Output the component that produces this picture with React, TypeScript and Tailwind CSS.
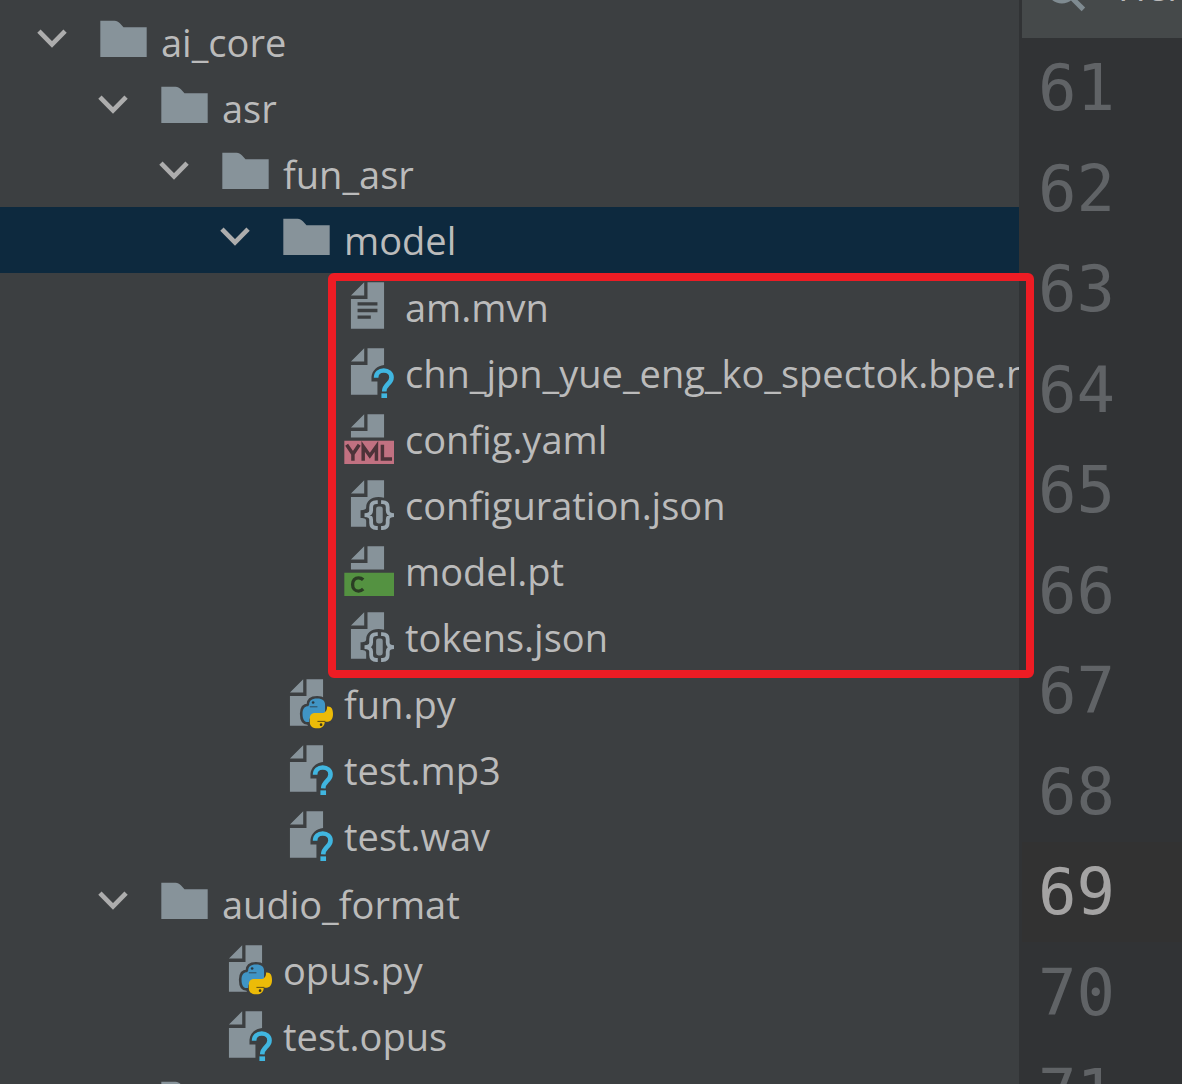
import type { ReactNode } from "react";

type Kind = "folder" | "text" | "unknown" | "yaml" | "json" | "c" | "python";

interface TreeNode {
  name: string;
  kind: Kind;
  selected?: boolean;
  framed?: boolean;
  children?: TreeNode[];
}

const tree: TreeNode[] = [
  {
    name: "ai_core",
    kind: "folder",
    children: [
      {
        name: "asr",
        kind: "folder",
        children: [
          {
            name: "fun_asr",
            kind: "folder",
            children: [
              {
                name: "model",
                kind: "folder",
                selected: true,
                framed: true,
                children: [
                  { name: "am.mvn", kind: "text" },
                  { name: "chn_jpn_yue_eng_ko_spectok.bpe.m", kind: "unknown" },
                  { name: "config.yaml", kind: "yaml" },
                  { name: "configuration.json", kind: "json" },
                  { name: "model.pt", kind: "c" },
                  { name: "tokens.json", kind: "json" },
                ],
              },
              { name: "fun.py", kind: "python" },
              { name: "test.mp3", kind: "unknown" },
              { name: "test.wav", kind: "unknown" },
            ],
          },
        ],
      },
      {
        name: "audio_format",
        kind: "folder",
        children: [
          { name: "opus.py", kind: "python" },
          { name: "test.opus", kind: "unknown" },
        ],
      },
      { name: "", kind: "folder" },
    ],
  },
];

const indents = ["pl-[25px]", "pl-[86px]", "pl-[147px]", "pl-[208px]", "pl-[269px]"];

const lineNumbers = [61, 62, 63, 64, 65, 66, 67, 68, 69, 70, 71];
const currentLine = 69;

function Icon({ children }: { children: ReactNode }) {
  return (
    <svg viewBox="0 0 16 16" className="size-[53px] shrink-0" aria-hidden="true">
      {children}
    </svg>
  );
}

function Page() {
  return <path fill="#87939a" d="M7 1 3 5h4V1ZM8 1v5H3v9h10V1H8Z" />;
}

function HalfPage() {
  return <path fill="#87939a" d="M7 1 3 5h4V1ZM8 1v5H3v2h10V1H8Z" />;
}

function FileIcon({ kind }: { kind: Kind }) {
  switch (kind) {
    case "folder":
      return (
        <Icon>
          <path fill="#87939a" d="M1 13h14V4H8L6.900 2.800C6.400 2.300 6 2 5.300 2H1v11Z" />
        </Icon>
      );
    case "text":
      return (
        <Icon>
          <Page />
          <path stroke="#3c3f41" d="M5 7.500h6M5 9.500h6M5 11.500h4" />
        </Icon>
      );
    case "unknown":
      return (
        <Icon>
          <path fill="#87939a" d="M7 1 3 5h4V1ZM8 1v5H3v9h8v-4H9.200V9.600C9.400 7.600 11 6.200 13 6V1H8Z" />
          <path fill="none" stroke="#40b6e0" strokeWidth="1.400" d="M10.600 9.900c0-1.400.95-2.200 2.300-2.200s2.350.85 2.350 2.100c0 1.900-2.200 2-2.200 4.200" />
          <path fill="#40b6e0" d="M12.200 14.600h1.700V16h-1.700z" />
        </Icon>
      );
    case "yaml":
      return (
        <Icon>
          <HalfPage />
          <path fill="#c17181" d="M1 9h15v7H1z" />
          <path fill="none" stroke="#4d3339" strokeWidth="1.050" d="m1.700 10.200 1.900 2.800 1.900-2.800M3.600 12.800V15M6.700 15v-4.300l2 2.800 2-2.800V15M12.500 10.200v4.300h2.900" />
        </Icon>
      );
    case "json":
      return (
        <Icon>
          <path fill="#87939a" d="M7 1 3 5h4V1ZM8 1v5H3v9h4.600v-1.700c0-.6-.3-.9-1.700-.9v-2.400c1.400 0 1.700-.3 1.700-.9C7.600 7.300 9 6 11.300 6c.6 0 1.100.1 1.700.3V1H8Z" />
          <path fill="none" stroke="#9aa7b0" strokeWidth="1.150" d="M11.100 7.600h-.4c-1 0-1.600.5-1.600 1.500v1c0 .8-.5 1.400-2 1.400 1.500 0 2 .6 2 1.400v1c0 1 .6 1.500 1.600 1.500h.4M12.100 7.600h.4c1 0 1.600.5 1.600 1.500v1c0 .8.500 1.400 2 1.400-1.500 0-2 .6-2 1.400v1c0 1-.6 1.500-1.600 1.500h-.4" />
          <rect x="10.600" y="8.900" width="2" height="5.100" rx=".7" fill="#87939a" />
        </Icon>
      );
    case "c":
      return (
        <Icon>
          <HalfPage />
          <path fill="#549241" d="M1 9h15v7H1z" />
          <path fill="none" stroke="#2b3d24" strokeWidth="1" d="M6.700 11.100c-.4-.4-.8-.6-1.400-.6-1.100 0-1.800.8-1.800 2s.7 2 1.800 2c.6 0 1-.2 1.400-.6" />
        </Icon>
      );
    case "python":
      return (
        <Icon>
          <Page />
          <g fill="#3c3f41" stroke="#3c3f41" strokeWidth="1.600" strokeLinejoin="round">
            <path d="M8.800 8.700c0-1.200.7-1.900 2.400-1.900s2.400.8 2.400 1.800v2c0 .9-.7 1.500-1.600 1.500h-1.800c-.9 0-1.400.6-1.400 1.600v.2h-.5c-1 0-1.500-1-1.500-2.500s.6-2.300 1.700-2.300Z" />
            <path d="M14.200 9.200h.3c1.100 0 1.500.9 1.500 2.300s-.6 2.300-1.600 2.300h-.9c0 1.200-.7 2-2.200 2s-2.300-.8-2.300-1.800v-1.500c0-.9.700-1.500 1.600-1.500h1.800c1 0 1.800-.5 1.800-1.800Z" />
          </g>
          <path fill="#4095c5" d="M8.800 8.700c0-1.200.7-1.900 2.400-1.900s2.400.8 2.400 1.800v2c0 .9-.7 1.500-1.600 1.500h-1.800c-.9 0-1.400.6-1.400 1.600v.2h-.5c-1 0-1.500-1-1.500-2.500s.6-2.300 1.700-2.300Z" />
          <path fill="#ecbb08" d="M14.200 9.200h.3c1.100 0 1.500.9 1.500 2.300s-.6 2.300-1.600 2.300h-.9c0 1.200-.7 2-2.200 2s-2.300-.8-2.300-1.800v-1.300c0-.9.700-1.500 1.600-1.500h1.800c1 0 1.800-.5 1.800-1.800Z" />
          <path stroke="#2f4a59" strokeWidth=".3" d="M9 9.300h2.300" />
          <path stroke="#5c4c12" strokeWidth=".3" d="M11.300 13.700h2.400" />
          <circle cx="10" cy="8" r=".4" fill="#2a3b45" />
          <circle cx="12.400" cy="14.700" r=".4" fill="#3b351f" />
        </Icon>
      );
  }
}

function Chevron() {
  return (
    <Icon>
      <path fill="none" stroke="#adadad" strokeWidth="1.400" d="m4.200 5.200 3.950 4 3.950-4" />
    </Icon>
  );
}

function Branch({ nodes, level }: { nodes: TreeNode[]; level: number }) {
  return (
    <ul className="pb-px">
      {nodes.map((node) => (
        <li key={node.name}>
          <div
            className={`flex h-[66px] items-center overflow-hidden pb-[3px] ${indents[level]} ${node.selected ? "bg-[#0d293e]" : ""}`}
          >
            <button type="button" aria-label={node.name} className="mr-[19px] size-[53px] shrink-0">
              {node.children && <Chevron />}
            </button>
            <FileIcon kind={node.kind} />
            <span className="min-w-0 flex-1 overflow-hidden pt-0.5 pl-[11px] text-[38px] leading-[52px] whitespace-nowrap">
              {node.name}
            </span>
          </div>
          {node.children && (
            <div className={node.framed ? "relative pt-px" : ""}>
              <Branch nodes={node.children} level={level + 1} />
              {node.framed && (
                <div className="pointer-events-none absolute top-0 -right-[15px] -bottom-[7px] left-[328px] z-10 rounded-md border-8 border-[#ed1c24]" />
              )}
            </div>
          )}
        </li>
      ))}
    </ul>
  );
}

export default function App() {
  return (
    <div className="flex h-screen overflow-hidden bg-[#313335] font-['Open_Sans','Noto_Sans',sans-serif] text-[#bbbbbb]">
      <nav className="min-w-0 flex-1 bg-[#3c3f41] pt-[9px]">
        <Branch nodes={tree} level={0} />
      </nav>
      <aside className="w-[163px] shrink-0 pl-[3px]">
        {/* search bar, scrolled mostly out of the top */}
        <div className="flex h-[38px] items-end overflow-hidden bg-[#45494a]">
          <div className="flex h-[96px] items-center pl-4">
            <Icon>
              <circle cx="7.200" cy="7.200" r="4" fill="none" stroke="#7f8b91" strokeWidth="1.400" />
              <path stroke="#7f8b91" strokeWidth="1.500" d="m10 10 3.700 3.700" />
            </Icon>
            <span className="pb-2 pl-[27px] text-[38px] leading-[52px]">Her</span>
          </div>
        </div>
        <ol className="font-['DejaVu_Sans_Mono',monospace] text-[64px] text-[#606366]">
          {lineNumbers.map((n) => (
            <li
              key={n}
              className={`flex h-[101px] items-center pl-4 odd:h-[100px] ${n === currentLine ? "bg-[#323232] text-[#a4a3a3]" : ""}`}
            >
              {n}
            </li>
          ))}
        </ol>
      </aside>
    </div>
  );
}
